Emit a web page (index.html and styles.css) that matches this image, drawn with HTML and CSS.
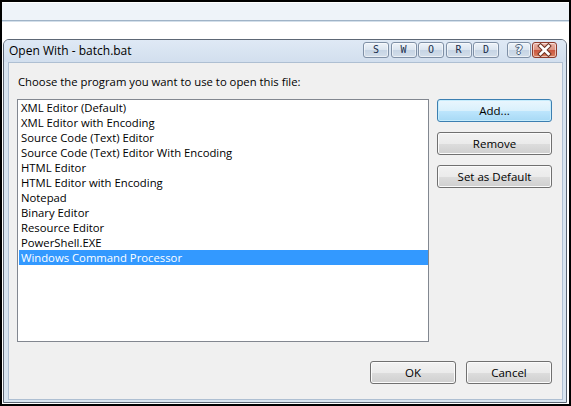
FILE: index.html
```html
<!DOCTYPE html>
<html>
<head>
<meta charset="utf-8">
<link rel="stylesheet" href="styles.css">
</head>
<body>
<div class="screen">
  <div class="bg-top"><div class="band"></div></div>
  <div class="dialog">
    <div class="titlebar">
      <span class="title">Open With - batch.bat</span>
      <div class="caps">
        <div class="group">
          <span class="cap">S</span>
          <span class="cap">W</span>
          <span class="cap">O</span>
          <span class="cap">R</span>
          <span class="cap">D</span>
        </div>
        <span class="cap help">?</span>
        <span class="cap close">
          <svg width="23" height="14" viewBox="0 0 23 14">
            <path d="M7.5 3 L15.5 11 M15.5 3 L7.5 11" stroke="#6e3426" stroke-width="4.6" stroke-linecap="square" fill="none"/>
            <path d="M7.5 3 L15.5 11 M15.5 3 L7.5 11" stroke="#ffffff" stroke-width="2.6" stroke-linecap="square" fill="none"/>
          </svg>
        </span>
      </div>
    </div>
    <div class="client">
      <div class="prompt">Choose the program you want to use to open this file:</div>
      <div class="main">
        <ul class="list">
          <li>XML Editor (Default)</li>
          <li>XML Editor with Encoding</li>
          <li>Source Code (Text) Editor</li>
          <li>Source Code (Text) Editor With Encoding</li>
          <li>HTML Editor</li>
          <li>HTML Editor with Encoding</li>
          <li>Notepad</li>
          <li>Binary Editor</li>
          <li>Resource Editor</li>
          <li>PowerShell.EXE</li>
          <li class="selected">Windows Command Processor</li>
        </ul>
        <div class="side">
          <button class="btn default">Add...</button>
          <button class="btn">Remove</button>
          <button class="btn">Set as Default</button>
        </div>
      </div>
      <div class="footer">
        <button class="btn wide">OK</button>
        <button class="btn wide">Cancel</button>
      </div>
    </div>
  </div>
</div>
</body>
</html>
```
FILE: styles.css
```css
html, body {
  margin: 0;
  padding: 0;
}
body {
  width: 571px;
  height: 406px;
  overflow: hidden;
  background: #ffffff;
  font-family: "Open Sans", "Noto Sans", sans-serif;
  font-size: 11.3px;
  color: #000;
}
.screen {
  box-sizing: border-box;
  width: 571px;
  height: 406px;
  border: 2px solid #000;
  display: flex;
  flex-direction: column;
  background: #fff;
}
.bg-top {
  height: 37px;
  flex: none;
}
.band {
  margin-top: 1px;
  height: 17px;
  background: #eef3f9;
  border-bottom: 1px solid #9fb3c7;
  box-shadow: 0 1px 0 #d3dfea;
}
.dialog {
  flex: 1;
  margin: 0 2px 1px 1px;
  border: 1px solid #5d6775;
  border-radius: 6px 6px 0 0;
  background: #d8e4f0;
  display: flex;
  flex-direction: column;
  padding: 0 3px 2px 4px;
  min-height: 0;
}
.titlebar {
  height: 22px;
  flex: none;
  display: flex;
  align-items: flex-start;
  margin: 0 -3px 0 -4px;
  padding: 0 9px 0 5px;
  background: linear-gradient(#dfe9f5, #d2dfee);
  border-radius: 5px 5px 0 0;
}
.title {
  line-height: 22px;
  font-size: 12px;
}
.caps {
  margin-left: auto;
  margin-top: 2px;
  display: flex;
  height: 16px;
}
.group {
  display: flex;
  gap: 1.5px;
  margin-right: 8px;
}
.cap {
  box-sizing: border-box;
  width: 26px;
  height: 16px;
  border: 1px solid #7f90a6;
  border-radius: 3px;
  background: linear-gradient(#eef3f9 0%, #dbe5f0 48%, #c6d4e4 52%, #d3deea 100%);
  box-shadow: inset 0 0 0 1px rgba(255, 255, 255, 0.55);
  font-family: "DejaVu Sans Mono", monospace;
  font-size: 10px;
  line-height: 14px;
  text-align: center;
  color: #1a2f4c;
}
.help {
  width: 24px;
  margin-right: 1px;
  font-family: "DejaVu Sans", sans-serif;
  font-size: 12px;
  font-weight: bold;
  color: #f4f7fb;
  text-shadow: 1px 0 0 #4a5e78, -1px 0 0 #4a5e78, 0 1px 0 #4a5e78, 0 -1px 0 #4a5e78;
}
.close {
  width: 25px;
  border-color: #8d3b2d;
  background: linear-gradient(#ecb6aa 0%, #dd9482 48%, #c9563f 52%, #d9805f 100%);
  display: flex;
  align-items: center;
  justify-content: center;
}
.client {
  flex: 1;
  min-height: 0;
  border: 1px solid #aebfd2;
  background: #f0f0f0;
  display: flex;
  flex-direction: column;
  padding: 11px 10px 15px 8px;
}
.prompt {
  line-height: 15px;
  padding-left: 1px;
  margin-bottom: 10px;
}
.main {
  display: flex;
  gap: 8px;
  align-items: flex-start;
}
.list {
  box-sizing: border-box;
  width: 412px;
  height: 243px;
  margin: 0;
  padding: 0 0 0 1px;
  list-style: none;
  background: #fff;
  border: 1px solid #828790;
}
.list li {
  height: 15px;
  line-height: 15px;
  padding-left: 2px;
  white-space: nowrap;
}
.list li.selected {
  background: #3399ff;
  color: #fff;
}
.side {
  display: flex;
  flex-direction: column;
  gap: 10px;
  width: 115px;
}
.btn {
  box-sizing: border-box;
  height: 23px;
  width: 115px;
  margin: 0;
  padding: 0;
  border: 1px solid #707070;
  border-radius: 3px;
  background: linear-gradient(#f2f2f2 0%, #ebebeb 50%, #dddddd 51%, #cfcfcf 100%);
  box-shadow: inset 0 0 0 1px #fbfbfb;
  font-family: "Open Sans", "Noto Sans", sans-serif;
  font-size: 11.5px;
  color: #000;
  text-align: center;
}
.btn.default {
  border-color: #3c7fb1;
  background: linear-gradient(#eaf6fd 0%, #d9f0fc 50%, #bee6fd 51%, #a7d9f5 100%);
  box-shadow: inset 0 0 0 1px #c6ecfc;
}
.footer {
  margin-top: auto;
  display: flex;
  justify-content: flex-end;
  gap: 10px;
}
.btn.wide {
  width: 86px;
}
```
